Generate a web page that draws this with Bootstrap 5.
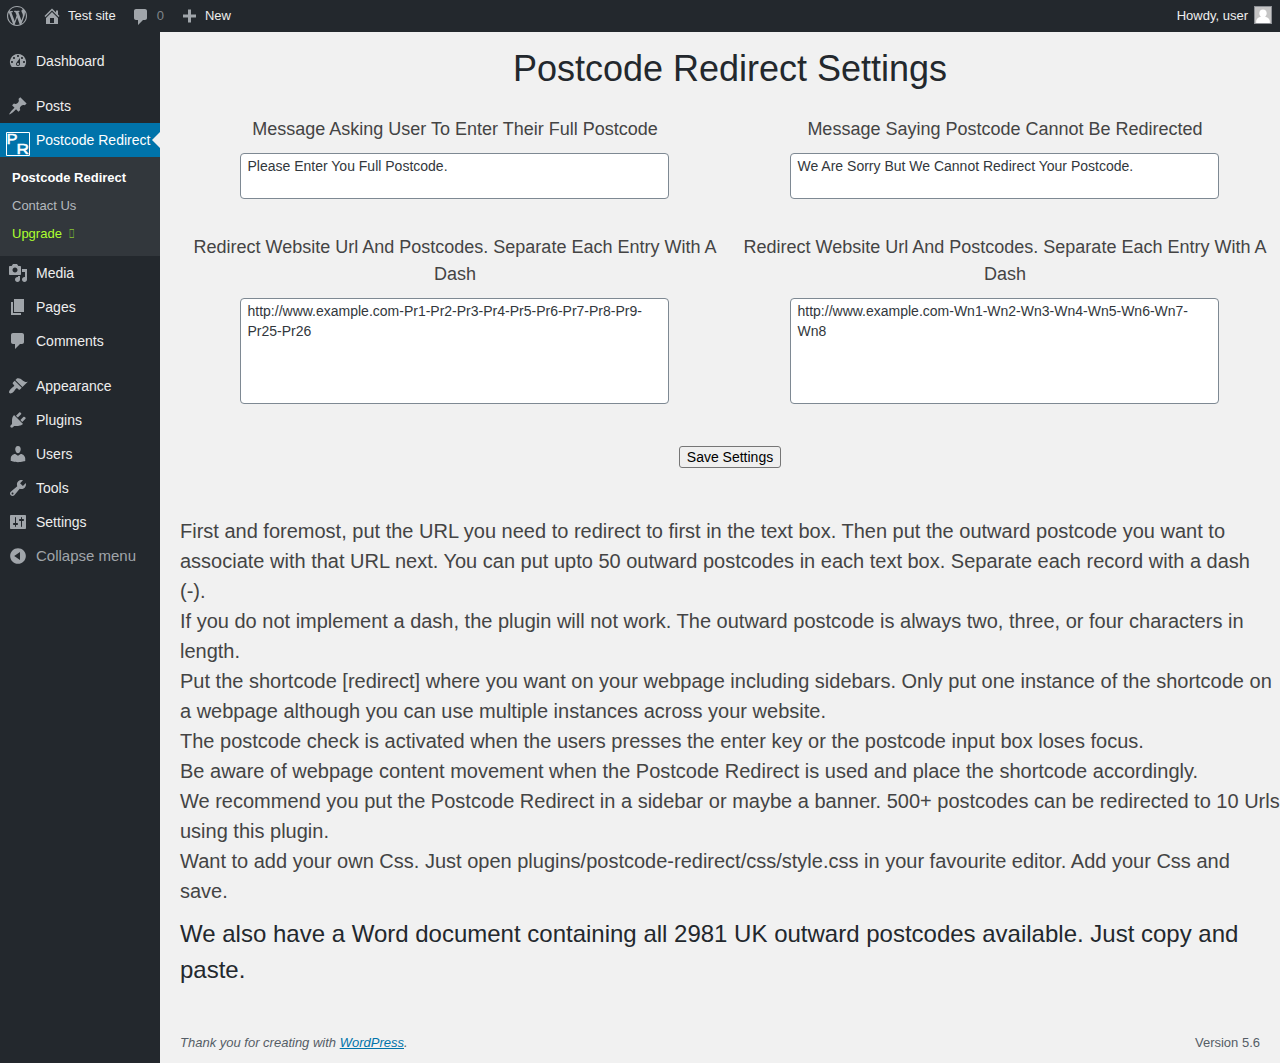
<!DOCTYPE html>
<html lang="en">
<head>
    <meta charset="UTF-8">
    <meta name="viewport" content="width=device-width, initial-scale=1">
    <title>Postcode Redirect Settings</title>
    <!-- Bootstrap CSS -->
    <link href="https://cdn.jsdelivr.net/npm/bootstrap@5.3.0/dist/css/bootstrap.min.css" rel="stylesheet">
    <style>
        body {
            font-family: "Liberation Sans", Arial, sans-serif;
            font-size: 14px;
            background-color: #f1f1f1;
            color: #444;
            height: 1063px;
            overflow: hidden;
        }
        svg {
            width: 20px;
            height: 20px;
            fill: #a0a5aa;
            flex: none;
        }
        a {
            color: #0073aa;
        }
        /* Top bar */
        #adminbar {
            height: 32px;
            background-color: #23282d;
            font-size: 13px;
            padding: 0 8px 0 7px;
        }
        #adminbar .nav-link {
            color: #eee;
            padding: 0;
            gap: 6px;
        }
        #adminbar .tight {
            margin-left: 15px;
        }
        #adminbar .tight svg {
            margin-top: 2px;
        }
        #adminbar .count {
            color: #9ea3a8;
            opacity: .75;
        }
        #adminbar .avatar {
            width: 18px;
            height: 18px;
            margin-bottom: 2px;
        }
        /* Side menu */
        #sidebar {
            width: 160px;
            background-color: #23282d;
            padding-top: 12px;
            flex: none;
        }
        #sidebar .nav-link {
            height: 34px;
            padding: 0 0 0 8px;
            gap: 8px;
            color: #eee;
            white-space: nowrap;
        }
        #sidebar .separated {
            margin-top: 11px;
        }
        #sidebar .current {
            background-color: #0073aa;
            color: #fff;
            padding-left: 6px;
            gap: 6px;
        }
        #sidebar .current svg {
            width: 24px;
            height: 24px;
            margin-top: 8px;
        }
        /* notch that points from the content to the open item */
        #sidebar .current::after {
            content: "";
            position: absolute;
            right: 0;
            top: 9px;
            border: 8px solid transparent;
            border-right-color: #f1f1f1;
            border-left: 0;
        }
        .submenu {
            background-color: #32373c;
            padding: 7px 0 8px;
            font-size: 13px;
        }
        .submenu a {
            display: block;
            height: 28px;
            line-height: 28px;
            padding-left: 12px;
            color: #b4b9be;
            text-decoration: none;
        }
        .submenu .upgrade {
            color: #adff2f;
        }
        .upgrade span {
            display: inline-block;
            transform: scaleX(.55);
            transform-origin: 0 50%;
        }
        #sidebar .collapse-link {
            color: #a0a5aa;
            font-size: 15px;
        }
        /* Settings form */
        #content {
            padding-left: 20px;
            min-width: 0;
        }
        h1 {
            font-size: 36px;
            line-height: 54px;
            color: #23282d;
            margin: 10px 0 20px;
        }
        .form-label {
            font-size: 18px;
            line-height: 27px;
            margin-bottom: 10px;
        }
        textarea.form-control {
            width: 429px;
            height: 46px;
            margin: 0 0 0 60px;
            padding: 2px 6.5px;
            border: 1px solid #7e8993;
            border-radius: 4px;
            color: #32373c;
            font-size: 14px;
            line-height: 20px;
            resize: none;
            overflow: hidden;
        }
        textarea.urls {
            height: 106px;
        }
        .save-row {
            padding: 42px 0 48px;
        }
        .save-btn {
            display: block;
            width: 102px;
            height: 22px;
            margin: 0 auto;
            padding: 0;
            border: 1px solid #767676;
            border-radius: 3px;
            background-color: #efefef;
            color: #000;
            font-size: 14px;
            line-height: 20px;
        }
        .help-text {
            font-size: 20px;
            line-height: 30px;
        }
        .word-note {
            font-size: 24px;
            line-height: 36px;
            color: #23282d;
            margin: 10px 0 0;
        }
        footer {
            font-size: 13px;
            line-height: 20px;
            color: #555d66;
            padding: 0 20px 10px 0;
        }
    </style>
</head>
<body class="d-flex flex-column">
    <!-- Top bar -->
    <nav id="adminbar" class="d-flex align-items-center">
        <a class="nav-link" href="#"><svg class="d-block" viewBox="0 0 20 20"><path d="M20 10c0-5.51-4.49-10-10-10C4.48 0 0 4.49 0 10c0 5.52 4.48 10 10 10 5.51 0 10-4.48 10-10zM7.78 15.37L4.37 6.22c.55-.02 1.17-.08 1.17-.08.5-.06.44-1.13-.06-1.11 0 0-1.45.11-2.37.11-.18 0-.37 0-.58-.01C4.12 2.69 6.87 1.11 10 1.11c2.33 0 4.45.87 6.05 2.34-.68-.11-1.65.39-1.65 1.58 0 .74.45 1.36.9 2.1.35.61.55 1.36.55 2.46 0 1.49-1.4 5-1.4 5l-3.03-8.37c.54-.02.82-.17.82-.17.5-.05.44-1.25-.06-1.22 0 0-1.44.12-2.38.12-.87 0-2.33-.12-2.33-.12-.5-.03-.56 1.2-.06 1.22l.92.08 1.26 3.41zM17.41 10c.24-.64.74-1.87.43-4.25.7 1.29 1.05 2.71 1.05 4.25 0 3.29-1.73 6.24-4.4 7.78.97-2.59 1.94-5.2 2.92-7.78zM6.1 18.09C3.12 16.65 1.11 13.53 1.11 10c0-1.3.23-2.48.72-3.59C3.25 10.3 4.67 14.2 6.1 18.09zm4.03-6.63l2.58 6.98c-.86.29-1.76.45-2.71.45-.79 0-1.57-.11-2.29-.33.81-2.38 1.62-4.74 2.42-7.1z"/></svg></a>
        <a class="nav-link d-flex align-items-center ms-3" href="#"><svg viewBox="0 0 20 20" style="margin-left:-1px"><path d="M16 8.5l1.53 1.53-1.06 1.06L10 4.6l-6.47 6.49-1.06-1.06L10 2.5l4 4v-2h2v4zm-6-2.46l6 5.99V18H4v-5.97zM12 17v-5H8v5h4z"/></svg>Test site</a>
        <a class="nav-link d-flex align-items-center tight" href="#"><svg viewBox="0 0 20 20"><path d="M5 2h9c1.1 0 2 .9 2 2v7c0 1.1-.9 2-2 2h-2l-5 5v-5H5c-1.1 0-2-.9-2-2V4c0-1.1.9-2 2-2z"/></svg><span class="count">0</span></a>
        <a class="nav-link d-flex align-items-center tight" href="#"><svg viewBox="0 0 20 20"><path d="M17 7.500v3h-5v5H9v-5H4v-3h5v-5h3v5z"/></svg>New</a>
        <a class="nav-link d-flex align-items-center ms-auto" href="#">Howdy, user<svg class="avatar" viewBox="0 0 18 18"><path fill="#8c8f94" d="M0 0h18v18H0z"/><path fill="#c5c5c5" d="M1 1h16v16H1z"/><path fill="#fff" d="M9 3.500c2.300 0 3.700 1.700 3.700 3.800 0 1.500-.7 2.700-1.600 3.400 2.300.5 4.200 1.800 4.700 4V17H2.200v-2.300c.5-2.200 2.400-3.500 4.700-4-.9-.7-1.600-1.900-1.600-3.400 0-2.100 1.400-3.800 3.700-3.800z"/></svg></a>
    </nav>

    <div class="d-flex flex-grow-1">
        <!-- Side menu -->
        <div id="sidebar">
            <nav class="nav flex-column flex-nowrap">
                <a class="nav-link d-flex align-items-center" href="#"><svg viewBox="0 0 20 20"><path d="M3.760 16h12.480A7.998 7.998 0 0010 3a7.998 7.998 0 00-6.240 13zM10 4c.55 0 1 .45 1 1s-.45 1-1 1-1-.45-1-1 .45-1 1-1zM6 6c.55 0 1 .45 1 1s-.45 1-1 1-1-.45-1-1 .45-1 1-1zm8 0c.55 0 1 .45 1 1s-.45 1-1 1-1-.45-1-1 .45-1 1-1zm-5.370 5.550L12 7v6c0 1.100-.9 2-2 2s-2-.9-2-2c0-.57.24-1.080.63-1.450zM4 10c.55 0 1 .45 1 1s-.45 1-1 1-1-.45-1-1 .45-1 1-1zm12 0c.55 0 1 .45 1 1s-.45 1-1 1-1-.45-1-1 .45-1 1-1zm-5 3c0-.55-.45-1-1-1s-1 .45-1 1 .45 1 1 1 1-.45 1-1z"/></svg>Dashboard</a>
                <a class="nav-link d-flex align-items-center separated" href="#"><svg viewBox="0 0 20 20"><path d="M10.440 3.020l1.820-1.820 6.360 6.350-1.830 1.820c-1.050-.68-2.480-.57-3.410.36l-.75.75c-.92.93-1.040 2.350-.35 3.410l-1.830 1.820-2.410-2.410-2.800 2.790c-.42.42-3.380 2.710-3.800 2.290s1.860-3.390 2.280-3.810l2.790-2.790L4.100 9.360l1.830-1.820c1.050.69 2.480.57 3.400-.36l.75-.75c.93-.92 1.050-2.350.36-3.410z"/></svg>Posts</a>
                <a class="nav-link d-flex align-items-center position-relative current" href="#"><svg viewBox="0 0 24 24"><path fill="none" stroke="#fff" d="M.5.5h23v23H.5z"/><g fill="#fff" font-family="Liberation Sans" stroke="#fff" stroke-width=".5"><text x=".5" y="12" font-size="14" textLength="11" lengthAdjust="spacingAndGlyphs">P</text><text x="10.500" y="22" font-size="14.500" textLength="12.500" lengthAdjust="spacingAndGlyphs">R</text></g></svg>Postcode Redirect</a>
                <div class="submenu">
                    <a class="fw-bold text-white" href="#">Postcode Redirect</a>
                    <a href="#">Contact Us</a>
                    <a class="upgrade" href="#">Upgrade&nbsp; <span>&#xe900;</span></a>
                </div>
                <a class="nav-link d-flex align-items-center" href="#"><svg viewBox="0 0 20 20"><path d="M13 11V4c0-.55-.45-1-1-1h-1.670L9 1H5L3.670 3H2c-.55 0-1 .45-1 1v7c0 .55.45 1 1 1h10c.55 0 1-.45 1-1zM7 4.500c1.380 0 2.500 1.120 2.500 2.500S8.380 9.500 7 9.500 4.500 8.380 4.500 7 5.620 4.500 7 4.500zM14 6h5v10.500c0 1.380-1.120 2.500-2.500 2.500S14 17.880 14 16.500s1.120-2.500 2.500-2.500c.17 0 .34.02.5.05V9h-3V6zm-4 8.050V13h2v3.500c0 1.380-1.120 2.500-2.500 2.500S7 17.880 7 16.500 8.120 14 9.500 14c.17 0 .34.02.5.05z"/></svg>Media</a>
                <a class="nav-link d-flex align-items-center" href="#"><svg viewBox="0 0 20 20"><path d="M6 15V2h10v13H6zm-1 1h8v2H3V5h2v11z"/></svg>Pages</a>
                <a class="nav-link d-flex align-items-center" href="#"><svg viewBox="0 0 20 20"><path d="M5 2h9c1.100 0 2 .9 2 2v7c0 1.100-.9 2-2 2h-2l-5 5v-5H5c-1.100 0-2-.9-2-2V4c0-1.100.9-2 2-2z"/></svg>Comments</a>
                <a class="nav-link d-flex align-items-center separated" href="#"><svg viewBox="0 0 20 20"><path d="M14.480 11.060L7.410 3.990l1.500-1.500c.5-.56 2.300-.47 3.510.32 1.210.8 1.430 1.280 2.910 2.100 1.180.64 2.450 1.260 4.450.85zm-.71.71L6.700 4.700 4.930 6.470c-.39.39-.39 1.020 0 1.410l1.060 1.060c.39.39.39 1.030 0 1.420-.6.6-1.430 1.110-2.210 1.690-.35.26-.7.53-1.010.84C1.430 14.230.4 16.080 1.400 17.070c.99 1 2.840-.03 4.180-1.360.31-.31.58-.66.85-1.020.57-.78 1.080-1.610 1.690-2.210.39-.39 1.020-.39 1.410 0l1.060 1.060c.39.39 1.020.39 1.410 0z"/></svg>Appearance</a>
                <a class="nav-link d-flex align-items-center" href="#"><svg viewBox="0 0 20 20"><path d="M13.110 4.360L9.870 7.600 8 5.730l3.240-3.240c.35-.34 1.050-.2 1.560.32.52.51.66 1.210.31 1.550zm-8 1.770l.91-1.120 9.010 9.010-1.190.84c-.71.71-2.630 1.160-3.820 1.160H6.140L4.900 17.260c-.59.59-1.540.59-2.120 0-.59-.58-.59-1.530 0-2.120l1.240-1.240v-3.880c0-1.130.4-3.190 1.090-3.890zm7.260 3.970l3.240-3.240c.34-.35 1.040-.21 1.550.31.52.51.66 1.210.31 1.550l-3.240 3.250z"/></svg>Plugins</a>
                <a class="nav-link d-flex align-items-center" href="#"><svg viewBox="0 0 20 20"><path d="M10 9.250c-2.270 0-2.730-3.440-2.730-3.440C7 4.020 7.820 2 9.970 2c2.160 0 2.980 2.020 2.710 3.810 0 0-.41 3.440-2.680 3.440zm0 2.570L12.720 10c2.390 0 4.520 2.330 4.520 4.530v2.490s-3.650 1.130-7.240 1.130c-3.650 0-7.240-1.130-7.240-1.130v-2.490c0-2.250 1.940-4.480 4.470-4.480z"/></svg>Users</a>
                <a class="nav-link d-flex align-items-center" href="#"><svg viewBox="0 0 20 20"><path d="M16.680 9.770c-1.340 1.340-3.300 1.670-4.950.99l-5.410 6.520c-.99.99-2.590.99-3.580 0s-.99-2.590 0-3.570l6.520-5.420c-.68-1.650-.35-3.610.99-4.950 1.280-1.280 3.120-1.620 4.720-1.060l-2.890 2.890 2.820 2.820 2.860-2.870c.53 1.580.18 3.390-1.080 4.650zM3.810 16.210c.4.39 1.040.39 1.430 0 .4-.4.4-1.040 0-1.430-.39-.4-1.030-.4-1.430 0-.39.39-.39 1.030 0 1.430z"/></svg>Tools</a>
                <a class="nav-link d-flex align-items-center" href="#"><svg viewBox="0 0 20 20"><path d="M18 16V4c0-.55-.45-1-1-1H3c-.55 0-1 .45-1 1v12c0 .55.45 1 1 1h14c.55 0 1-.45 1-1zM8 11h1c.55 0 1 .45 1 1s-.45 1-1 1H8v1.500c0 .28-.22.5-.5.5s-.5-.22-.5-.5V13H6c-.55 0-1-.45-1-1s.45-1 1-1h1V5.500c0-.28.22-.5.5-.5s.5.22.5.5V11zm5-2h-1c-.55 0-1-.45-1-1s.45-1 1-1h1V5.500c0-.28.22-.5.5-.5s.5.22.5.5V7h1c.55 0 1 .45 1 1s-.45 1-1 1h-1v5.500c0 .28-.22.5-.5.5s-.5-.22-.5-.5V9z"/></svg>Settings</a>
                <a class="nav-link d-flex align-items-center collapse-link" href="#"><svg viewBox="0 0 20 20"><path d="M10 2.160c4.330 0 7.840 3.510 7.840 7.840s-3.510 7.840-7.840 7.840S2.160 14.330 2.160 10 5.710 2.160 10 2.160zm2 11.720V6.120L6.180 9.970z"/></svg>Collapse menu</a>
            </nav>
        </div>

        <!-- Content -->
        <div id="content" class="d-flex flex-column flex-grow-1">
            <h1 class="text-center fw-normal">Postcode Redirect Settings</h1>
            <form>
                <div class="row g-0 text-center">
                    <div class="col-6">
                        <label class="form-label d-block" for="askMessage">Message Asking User To Enter Their Full Postcode</label>
                        <textarea class="form-control" id="askMessage">Please Enter You Full Postcode.</textarea>
                    </div>
                    <div class="col-6">
                        <label class="form-label d-block" for="sorryMessage">Message Saying Postcode Cannot Be Redirected</label>
                        <textarea class="form-control" id="sorryMessage">We Are Sorry But We Cannot Redirect Your Postcode.</textarea>
                    </div>
                </div>
                <div class="row g-0 text-center" style="margin-top:35px">
                    <div class="col-6">
                        <label class="form-label d-block" for="urls1">Redirect Website Url And Postcodes. Separate Each Entry With A Dash</label>
                        <textarea class="form-control urls" id="urls1">http://www.example.com-Pr1-Pr2-Pr3-Pr4-Pr5-Pr6-Pr7-Pr8-Pr9-Pr25-Pr26</textarea>
                    </div>
                    <div class="col-6">
                        <label class="form-label d-block" for="urls2">Redirect Website Url And Postcodes. Separate Each Entry With A Dash</label>
                        <textarea class="form-control urls" id="urls2">http://www.example.com-Wn1-Wn2-Wn3-Wn4-Wn5-Wn6-Wn7-Wn8</textarea>
                    </div>
                </div>
                <div class="save-row">
                    <button type="button" class="save-btn">Save Settings</button>
                </div>
            </form>
            <div class="help-text">
                <p class="m-0">First and foremost, put the URL you need to redirect to first in the text box. Then put the outward postcode you want to associate with that URL next. You can put upto 50 outward postcodes in each text box. Separate each record with a dash (-).</p>
                <p class="m-0">If you do not implement a dash, the plugin will not work. The outward postcode is always two, three, or four characters in length.</p>
                <p class="m-0">Put the shortcode [redirect] where you want on your webpage including sidebars. Only put one instance of the shortcode on a webpage although you can use multiple instances across your website.</p>
                <p class="m-0">The postcode check is activated when the users presses the enter key or the postcode input box loses focus.</p>
                <p class="m-0">Be aware of webpage content movement when the Postcode Redirect is used and place the shortcode accordingly.</p>
                <p class="m-0">We recommend you put the Postcode Redirect in a sidebar or maybe a banner. 500+ postcodes can be redirected to 10 Urls using this plugin.</p>
                <p class="m-0">Want to add your own Css. Just open plugins/postcode-redirect/css/style.css in your favourite editor. Add your Css and save.</p>
            </div>
            <p class="word-note">We also have a Word document containing all 2981 UK outward postcodes available. Just copy and paste.</p>
            <footer class="d-flex justify-content-between mt-auto">
                <span class="fst-italic">Thank you for creating with <a href="#">WordPress</a>.</span>
                <span>Version 5.6</span>
            </footer>
        </div>
    </div>

    <!-- Bootstrap JS -->
    <script src="https://cdn.jsdelivr.net/npm/bootstrap@5.3.0/dist/js/bootstrap.bundle.min.js"></script>
</body>
</html>
